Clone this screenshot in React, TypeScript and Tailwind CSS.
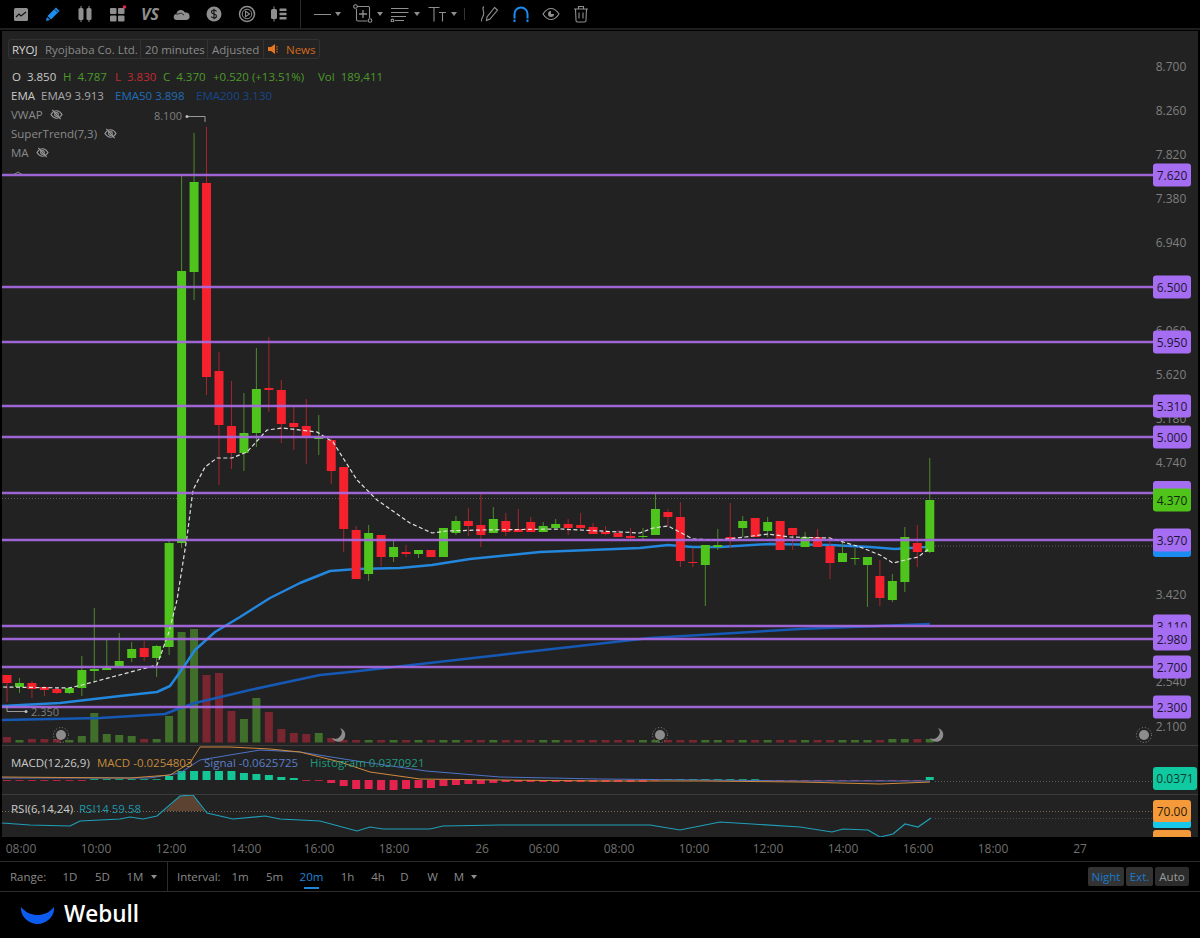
import React from 'react';

// [bodyTop, bodyBottom, wickTop, wickBottom, 'g' | 'r'] in page pixels
type Candle = [number, number, number, number, 'g' | 'r'];

const candles: Candle[] = [
  [675, 683, 675, 702, 'r'], [683, 687, 678, 693, 'g'], [683, 689, 681, 698, 'r'], [687, 690, 686, 696, 'r'],
  [689, 693, 688, 694, 'r'], [688, 693, 687, 694, 'g'], [670, 688, 656, 696, 'g'], [669, 671, 608, 683, 'g'],
  [668, 670, 640, 670, 'g'], [661, 666, 633, 666, 'g'], [649, 658, 642, 662, 'g'], [648, 657, 641, 661, 'r'],
  [646, 658, 645, 677, 'g'], [543, 647, 540, 655, 'g'], [271, 543, 176, 548, 'g'], [182, 272, 133, 300, 'g'],
  [183, 377, 127, 395, 'r'], [371, 425, 352, 485, 'r'], [426, 453, 381, 469, 'r'], [433, 453, 393, 471, 'g'],
  [389, 433, 348, 447, 'g'], [388, 390, 337, 412, 'r'], [390, 424, 380, 443, 'r'], [423, 427, 407, 450, 'r'],
  [426, 436, 399, 464, 'r'], [437, 439, 415, 455, 'g'], [440, 471, 438, 484, 'r'], [467, 529, 467, 552, 'r'],
  [530, 579, 526, 579, 'r'], [533, 574, 525, 581, 'g'], [535, 557, 535, 566, 'r'], [547, 557, 539, 562, 'g'],
  [552, 554, 545, 557, 'r'], [550, 554, 550, 558, 'g'], [550, 557, 550, 557, 'r'], [528, 557, 528, 557, 'g'],
  [521, 533, 516, 535, 'g'], [521, 526, 508, 536, 'r'], [525, 535, 493, 547, 'r'], [519, 533, 507, 533, 'g'],
  [521, 532, 513, 536, 'r'], [529, 532, 509, 532, 'r'], [522, 532, 517, 532, 'r'], [526, 532, 522, 532, 'g'],
  [524, 528, 519, 528, 'g'], [524, 528, 519, 535, 'r'], [525, 528, 513, 530, 'r'], [527, 534, 523, 534, 'r'],
  [532, 534, 526, 535, 'r'], [533, 537, 530, 537, 'r'], [536, 538, 528, 539, 'r'], [536, 537, 528, 540, 'g'],
  [509, 535, 493, 535, 'g'], [512, 517, 509, 526, 'r'], [517, 561, 502, 567, 'r'], [562, 563, 548, 567, 'r'],
  [545, 565, 545, 606, 'g'], [545, 547, 529, 550, 'g'], [537, 540, 503, 548, 'r'], [521, 528, 516, 537, 'g'],
  [518, 537, 518, 537, 'r'], [522, 531, 517, 537, 'g'], [521, 550, 521, 550, 'r'], [528, 535, 528, 550, 'r'],
  [537, 547, 532, 547, 'g'], [537, 547, 529, 547, 'r'], [546, 563, 537, 579, 'r'], [553, 562, 540, 562, 'g'],
  [558, 559, 548, 565, 'g'], [557, 565, 557, 607, 'g'], [576, 598, 560, 606, 'r'], [581, 600, 574, 602, 'g'],
  [537, 582, 527, 592, 'g'], [543, 552, 525, 567, 'r'], [500, 552, 458, 553, 'g'],
];

const volumeTops = [737, 740, 739, 739, 739, 740, 736, 713, 734, 735, 736, 739, 739, 716, 632, 629, 675, 673, 711, 719, 698, 712, 729, 733, 734, 733, 738];

const macdBars = [
  -1, -1, -1, -1, -1, -1, -1, 1, 1, 1, 1, 1, 1, 4, 9, 9, 9, 9, 9, 7, 6, 5, 3, 2, -1, -1, -3, -6, -9, -9, -10, -10, -9, -8, -8, -6, -5, -4, -4, -3,
  -2, -2, -2, -2, -2, -2, -2, -2, -2, -2, -2, -2, -1, 1, 1, 1, 1, 1, 1, 1, 1, -1, -1, -1, -1, -1, -1, -1, -1, -1, -1, -1, -1, -1, 3,
];

const ema9 = '3,687 69,688 82,685 157,665 169,632 177,600 187,537 193,490 205,467 217,458 232,458 247,452 267,430 283,428 317,432 333,442 357,480 377,500 410,523 432,533 447,531 481,530 560,529 640,533 653,528 668,526 693,539 718,540 745,537 768,534 790,537 830,538 860,547 880,555 893,563 905,560 918,557 930,548';
const ema50 = '2,706 60,703 120,696 157,692 170,686 185,665 195,650 215,632 240,617 270,598 300,583 330,571 357,569 400,568 432,565 470,559 540,552 640,548 668,545 693,547 720,547 770,544 830,545 870,547 895,549 925,547 930,546';
const ema200 = '2,720 100,718 165,714 175,710 195,703 250,690 320,675 350,672 500,655 650,638 800,629 930,624';

const purpleLines = [
  { y: 175, label: '7.620' }, { y: 287, label: '6.500' }, { y: 342, label: '5.950' }, { y: 406, label: '5.310' },
  { y: 437, label: '5.000' }, { y: 493, label: '' }, { y: 540, label: '3.970' }, { y: 626, label: '3.110' },
  { y: 639, label: '2.980' }, { y: 667, label: '2.700' }, { y: 707, label: '2.300' },
];

const axisPrices = [
  ['8.700', 67], ['8.260', 111], ['7.820', 155], ['7.380', 199], ['6.940', 243], ['6.060', 331], ['5.620', 375],
  ['5.180', 419], ['4.740', 463], ['3.420', 595], ['2.540', 682], ['2.100', 727],
] as const;

const timeLabels = [
  ['08:00', 21], ['10:00', 96], ['12:00', 171], ['14:00', 246], ['16:00', 319], ['18:00', 394], ['26', 482],
  ['06:00', 544], ['08:00', 619], ['10:00', 694], ['12:00', 768], ['14:00', 843], ['16:00', 918], ['18:00', 993], ['27', 1080],
] as const;

const cx = (i: number) => 7 + i * 12.47;

function Sun({ x, y }: { x: number; y: number }) {
  return (
    <g fill="#8c8c8c">
      <circle cx={x} cy={y} r="5" />
      <circle cx={x} cy={y} r="7.5" fill="none" stroke="#8c8c8c" strokeWidth="1" strokeDasharray="1 2" />
    </g>
  );
}

function Moon({ x, y }: { x: number; y: number }) {
  return <path transform={`translate(${x} ${y})`} d="M2-7A7 7 0 1 1-6 3 6.500 6.500 0 0 0 2-7Z" fill="#8c8c8c" />;
}

function MainChart() {
  return (
    <svg viewBox="2 31 1196 714" className="block h-full w-full" style={{ fontSize: 12 }}>
      {axisPrices.map(([t, y]) => (
        <text key={t} x="1171" y={y + 4} textAnchor="middle" fill="#7f7f7f">{t}</text>
      ))}
      <line x1="2" x2="1153" y1="498.500" y2="498.500" stroke="#5c5c5c" strokeDasharray="1 2" />
      <line x1="935" x2="1153" y1="546" y2="546" stroke="#5c5c5c" strokeDasharray="1 2" />

      {candles.map((c, i) => {
        const top = i < volumeTops.length ? volumeTops[i] : i > 70 ? 739 : 740;
        return (
          <rect key={i} x={cx(i) - 4} y={top} width="8" height={742.5 - top} fill={c[4] === 'g' ? '#3f6f2a' : '#7a2630'} />
        );
      })}

      <polyline points={ema200} fill="none" stroke="#1559b5" strokeWidth="2.5" strokeLinejoin="round" />
      <polyline points={ema50} fill="none" stroke="#2387dd" strokeWidth="2.5" strokeLinejoin="round" />

      {candles.map((c, i) => (
        <g key={i}>
          <line x1={cx(i)} x2={cx(i)} y1={c[2]} y2={c[3]} stroke={c[4] === 'g' ? '#4f8a2c' : '#a5262f'} strokeWidth="1" />
          <rect x={cx(i) - 4.500} y={c[0]} width="9" height={c[1] - c[0]} fill={c[4] === 'g' ? '#4fc41c' : '#f5222d'} />
        </g>
      ))}

      <polyline points={ema9} fill="none" stroke="#e0e0e0" strokeWidth="1.2" strokeDasharray="4 2.500" />

      {purpleLines.map((l) => (
        <line key={l.y} x1="2" x2="1153" y1={l.y} y2={l.y} stroke="#a86ae4" strokeOpacity="0.92" strokeWidth="2.4" />
      ))}

      <rect x="1153" y="481" width="38" height="20" rx="3" fill="#a56ef2" />
      <rect x="1153" y="548" width="38" height="9" rx="3" fill="#1b8cf2" />
      {purpleLines.filter((l) => l.label).map((l) => (
        <g key={l.y}>
          <rect x="1153" y={l.y - 11.500} width="38" height="23" rx="3" fill="#a56ef2" />
          <text x="1172" y={l.y + 4.500} textAnchor="middle" fill="#1d1433">{l.label}</text>
        </g>
      ))}
      <rect x="1153" y="488.500" width="38" height="23" rx="3" fill="#50c31a" />
      <text x="1172" y="504.500" textAnchor="middle" fill="#10290a">4.370</text>

      <g fill="none" stroke="#9a9a9a">
        <path d="M187 116.500H205V122" />
        <path d="M7 706V711.500H26" />
        <path d="M14 174.500 18 172 22 174.500" stroke="#8a8a8a" />
      </g>
      <circle cx="187" cy="116.500" r="1.500" fill="#bdbdbd" />
      <circle cx="26" cy="711.500" r="1.500" fill="#bdbdbd" />
      <text x="182" y="120" textAnchor="end" fill="#7f7f7f" style={{ fontSize: 11 }}>8.100</text>
      <text x="31" y="716" fill="#7f7f7f" style={{ fontSize: 11 }}>2.350</text>

      <Sun x={61} y={735} />
      <Moon x={338} y={735} />
      <Sun x={660} y={735} />
      <Moon x={936} y={735} />
      <Sun x={1144} y={735} />
    </svg>
  );
}

function MacdChart() {
  return (
    <svg viewBox="2 746 1196 48" className="block h-full w-full" style={{ fontSize: 12 }}>
      <line x1="935" x2="1153" y1="781.500" y2="781.500" stroke="#5c5c5c" strokeDasharray="1 2" />
      {macdBars.map((h, i) => (
        <rect key={i} x={cx(i) - 4} y={h > 0 ? 780 - h : 780} width="8" height={Math.max(Math.abs(h), 1)} fill={h > 0 ? '#14c596' : '#e5234f'} opacity={Math.abs(h) < 2 ? 0.75 : 1} />
      ))}
      <polyline points="2,778 150,778 180,773 200,760 260,750 300,752 350,760 426,771 500,777 600,779 800,781 930,781" fill="none" stroke="#4e74c8" strokeWidth="1" />
      <polyline points="2,777 130,778 170,775 190,763 200,747 230,747 270,749 300,752 340,762 370,772 420,779 500,780 600,781 700,781 800,782 880,784 930,782" fill="none" stroke="#d08a3c" strokeWidth="1" />
      <rect x="1153" y="767" width="44" height="23" rx="3" fill="#10c9a0" />
      <text x="1175" y="783" textAnchor="middle" fill="#0d3a30">0.0371</text>
    </svg>
  );
}

function RsiChart() {
  return (
    <svg viewBox="2 795 1196 42" className="block h-full w-full" style={{ fontSize: 12 }}>
      <line x1="2" x2="1153" y1="811.500" y2="811.500" stroke="#7a6a55" strokeDasharray="1 2" />
      <line x1="935" x2="1153" y1="818.500" y2="818.500" stroke="#4a4a4a" strokeDasharray="1 2" />
      <polygon points="165,811 180,796 193,795 204,811" fill="#5b4231" />
      <polyline
        points="2,823 30,825 70,826 80,821 120,819 130,817 143,819 157,816 180,796 193,795 207,813 233,819 265,816 280,819 320,821 357,831 370,827 383,829 430,829 443,826 500,825 650,825 680,830 720,822 800,827 832,832 843,829 868,830 880,837 893,834 905,824 918,827 931,818"
        fill="none"
        stroke="#1f9fb8"
        strokeWidth="1.2"
      />
      <rect x="1153" y="830" width="38" height="20" rx="3" fill="#f59a3a" />
      <rect x="1153" y="820" width="38" height="8" rx="2" fill="#18c8ea" />
      <rect x="1153" y="800" width="38" height="22" rx="3" fill="#f59a3a" />
      <text x="1172" y="816" textAnchor="middle" fill="#2c1a06">70.00</text>
    </svg>
  );
}

function Caret({ flush }: { flush?: boolean }) {
  return <span className={`${flush ? '' : 'ml-[4px]'} h-0 w-0 border-x-[3px] border-t-[4px] border-x-transparent border-t-[#8f8f8f]`} />;
}

function EyeOff() {
  return (
    <svg width="13" height="13" viewBox="0 0 14 14" fill="none" stroke="#9a9a9a" strokeWidth="1.200">
      <path d="M1 7C3 4 5 3 7 3s4 1 6 4c-2 3-4 4-6 4S3 10 1 7Z" />
      <circle cx="7" cy="7" r="2" />
      <path d="M2.500 2 11.500 12" />
    </svg>
  );
}

const gray = '#8f8f8f';

function TopIcons() {
  return (
    <>
      <div className="flex w-[32px] justify-center">
        <svg width="16" height="15" viewBox="0 0 16 15">
          <rect x="1" y="1" width="14" height="13" rx="1.500" fill={gray} />
          <path d="M3 10 6 7l2 2 5-4" fill="none" stroke="#111" strokeWidth="1.200" />
        </svg>
      </div>
      <div className="flex w-[32px] justify-center">
        <svg width="16" height="16" viewBox="0 0 16 16">
          <path d="M11 1.500 14.500 5 6 13.500 2.500 10Z" fill="#1c8cf0" />
          <path d="M2 11 5 14 1 15Z" fill="#1c8cf0" />
          <path d="M10 3.500 12.500 6" stroke="#000" strokeWidth="0.800" />
        </svg>
      </div>
      <div className="flex w-[32px] justify-center">
        <svg width="16" height="18" viewBox="0 0 16 18" fill={gray}>
          <rect x="1.500" y="3" width="5" height="12" rx="1.500" />
          <rect x="9.500" y="3" width="5" height="12" rx="1.500" />
          <rect x="3.500" y="1" width="1" height="16" />
          <rect x="11.500" y="1" width="1" height="16" />
        </svg>
      </div>
      <div className="flex w-[33px] justify-center">
        <svg width="18" height="18" viewBox="0 0 18 18" fill={gray}>
          <rect x="1" y="3" width="6.500" height="6" rx="1" />
          <rect x="9" y="3" width="6.500" height="6" rx="1" />
          <rect x="1" y="10.500" width="6.500" height="6" rx="1" />
          <rect x="9" y="10.500" width="6.500" height="6" rx="1" />
          <circle cx="15.500" cy="2" r="1.800" fill="#e5234f" />
        </svg>
      </div>
      <div className="flex w-[32px] justify-center text-[16px] leading-none font-bold italic text-[#8f8f8f]">VS</div>
      <div className="flex w-[32px] justify-center">
        <svg width="18" height="14" viewBox="0 0 18 14">
          <path d="M4 13a3 3 0 0 1-.5-6A4.500 4.500 0 0 1 12 5.500 3.800 3.800 0 0 1 13.500 13Z" fill={gray} />
          <path d="M3.500 7.500 8 6l3 2" fill="none" stroke="#111" strokeWidth="0.800" />
        </svg>
      </div>
      <div className="flex w-[32px] justify-center">
        <svg width="18" height="18" viewBox="0 0 18 18">
          <circle cx="9" cy="9" r="7.500" fill={gray} />
          <path d="M11.500 6.500C11 5.500 10 5 9 5 7.500 5 6.500 5.800 6.500 7c0 2.500 5 1.500 5 4 0 1.200-1 2-2.500 2-1.200 0-2.200-.5-2.700-1.500M9 3.800v10.400" fill="none" stroke="#111" strokeWidth="1.100" />
        </svg>
      </div>
      <div className="flex w-[33px] justify-center">
        <svg width="18" height="18" viewBox="0 0 18 18" fill="none" stroke={gray}>
          <circle cx="9" cy="9" r="7.500" strokeWidth="1.500" />
          <circle cx="9" cy="9" r="4.800" strokeWidth="1" />
          <path d="M7.500 6.300 11.500 9l-4 2.700Z" strokeWidth="1.100" />
        </svg>
      </div>
      <div className="flex w-[32px] justify-center">
        <svg width="18" height="18" viewBox="0 0 18 18" fill={gray}>
          <rect x="1" y="4" width="6" height="10" rx="1.500" />
          <rect x="3.500" y="1.500" width="1" height="15" />
          <rect x="9.500" y="3.500" width="7" height="2.500" rx="0.500" />
          <rect x="9.500" y="7.800" width="7" height="2.500" rx="0.500" />
          <rect x="9.500" y="12" width="7" height="2.500" rx="0.500" />
        </svg>
      </div>
    </>
  );
}

function DrawIcons() {
  return (
    <>
      <div className="ml-[13px] flex w-[27px] items-center">
        <span className="h-px w-[17px] bg-[#8f8f8f]" />
        <Caret />
      </div>
      <div className="ml-[12px] flex w-[30px] items-center">
        <svg width="20" height="20" viewBox="0 0 20 20" fill="none" stroke={gray} strokeWidth="1.100">
          <path d="M4 2.500H15.500a1.500 1.500 0 0 1 1 1.500V14M14.500 17H5A1.500 1.500 0 0 1 3.500 15.500V5" />
          <circle cx="2.500" cy="2.500" r="1.800" />
          <circle cx="17" cy="16.500" r="1.800" />
          <path d="M10 6v8M6 10h8" strokeWidth="1.300" />
        </svg>
        <Caret />
      </div>
      <div className="ml-[7px] flex w-[30px] items-center">
        <svg width="20" height="16" viewBox="0 0 20 16" fill="none" stroke={gray} strokeWidth="1.200">
          <path d="M1 2.500H18.500M1 6.500H18.500M1 10.500H16M5 14.500H14" />
          <circle cx="2.500" cy="14.500" r="1.300" />
        </svg>
        <Caret />
      </div>
      <div className="ml-[8px] flex w-[29px] items-center">
        <svg width="19" height="18" viewBox="0 0 19 18" fill="none" stroke={gray} strokeWidth="1.100">
          <path d="M0.500 2.500H11.500M6 2.500V16.500M11 7.500H18M14.500 7.500V16.500" />
        </svg>
        <Caret />
      </div>
      <span className="ml-[7px] h-[12px] w-px bg-[#333]" />
      <div className="ml-[15px] flex w-[20px] justify-center">
        <svg width="20" height="18" viewBox="0 0 20 18" fill="none" stroke={gray} strokeWidth="1.100">
          <path d="M4 1.500C1 3 5 7 3.500 10 2.500 12.500 1 14 1.500 16.500" />
          <path d="M14.500 2.500 17.500 5 10 14 6.500 15.500 7 12Z" />
        </svg>
      </div>
      <div className="ml-[11px] flex w-[20px] justify-center">
        <svg width="18" height="18" viewBox="0 0 18 18" fill="none" stroke="#1c8cf0" strokeWidth="2">
          <path d="M2.500 17V9a6.500 6.500 0 0 1 13 0v8" />
          <path d="M1 14h4M13 14h4" strokeWidth="1" stroke="#000" />
        </svg>
      </div>
      <div className="ml-[10px] flex w-[20px] justify-center">
        <svg width="18" height="14" viewBox="0 0 18 14" fill="none" stroke={gray} strokeWidth="1.200">
          <path d="M1 7C4 2.500 6.500 1.500 9 1.500S14 2.500 17 7c-3 4.500-5.500 5.500-8 5.500S4 11.500 1 7Z" />
          <path d="M9 4a3 3 0 1 0 3 3H9Z" fill={gray} stroke="none" />
        </svg>
      </div>
      <div className="ml-[10px] flex w-[20px] justify-center">
        <svg width="16" height="18" viewBox="0 0 16 18" fill="none" stroke={gray} strokeWidth="1.100">
          <path d="M1 4h14M5.500 4V1.500h5V4M2.500 4l.5 11.500a1.500 1.500 0 0 0 1.500 1.500h7a1.500 1.500 0 0 0 1.500-1.500L13.500 4M6 7.500v6M10 7.500v6" />
        </svg>
      </div>
    </>
  );
}

function ChartHeader() {
  return (
    <div className="absolute top-[8px] left-[6px] flex flex-col text-[11.5px] leading-[19px]">
      <div className="flex h-[20px] w-[312px] items-center rounded-[3px] border border-[#333] bg-[#232323] text-[#8a8a8a]">
        <span className="ml-[3px] w-[33px] text-[#d5d5d5]">RYOJ</span>
        <span className="w-[96px] border-r border-[#333] whitespace-nowrap">Ryojbaba Co. Ltd.</span>
        <span className="w-[67px] border-r border-[#333] pl-[4px] whitespace-nowrap">20 minutes</span>
        <span className="w-[56px] border-r border-[#333] pl-[4px]">Adjusted</span>
        <span className="flex items-center gap-[6px] pl-[4px] text-[#d2691e]">
          <svg width="12" height="12" viewBox="0 0 12 12" fill="#e8761e">
            <path d="M0 4h3l4-3v10L3 8H0Z" />
            <path d="M8.500 3h1v1.500h-1ZM8.500 5.500h1V7h-1ZM8.500 8h1v1.500h-1Z" />
          </svg>
          News
        </span>
      </div>
      <div className="mt-[8px] ml-[4px] flex flex-col">
        <div className="flex whitespace-nowrap text-[#4c9a2a]">
          <span className="w-[51px] text-[#c9c9c9]">O&nbsp; 3.850</span>
          <span className="w-[52px]">H&nbsp; 4.787</span>
          <span className="w-[48px] text-[#c02a35]">L&nbsp; 3.830</span>
          <span className="w-[50px]">C&nbsp; 4.370</span>
          <span className="w-[105px]">+0.520 (+13.51%)</span>
          <span>Vol&nbsp; 189,411</span>
        </div>
        <div className="flex whitespace-nowrap">
          <span className="-ml-[1px] w-[30px] text-[#c9c9c9]">EMA</span>
          <span className="w-[74px] text-[#a8a8a8]">EMA9 3.913</span>
          <span className="w-[81px] text-[#1f6db8]">EMA50 3.898</span>
          <span className="text-[#16468c]">EMA200 3.130</span>
        </div>
        <div className="-ml-[1px] flex items-center gap-[7px] text-[#8a8a8a]">VWAP <EyeOff /></div>
        <div className="-ml-[1px] flex items-center gap-[7px] text-[#8a8a8a]">SuperTrend(7,3) <EyeOff /></div>
        <div className="-ml-[1px] flex items-center gap-[7px] text-[#8a8a8a]">MA <EyeOff /></div>
      </div>
    </div>
  );
}

export default function App() {
  return (
    <div className="flex h-[938px] w-[1200px] flex-col overflow-hidden bg-black font-['Open_Sans',sans-serif]">
      <div className="flex h-[28px] shrink-0 items-center pl-[5px]">
        <TopIcons />
        <span className="ml-[5px] h-[28px] w-px bg-[#2a2a2a]" />
        <DrawIcons />
      </div>
      <div className="h-[2px] shrink-0 bg-[#1e1e1e]" />
      <div className="h-px shrink-0" />

      <div className="relative mx-[2px] h-[714px] shrink-0 bg-[#222222]">
        <MainChart />
        <ChartHeader />
      </div>
      <div className="relative mx-[2px] h-[49px] shrink-0 border-t border-[#3c3c3c] bg-[#222222]">
        <MacdChart />
        <div className="absolute top-[7px] left-[9px] flex text-[11.5px] leading-[19px] whitespace-nowrap">
          <span className="w-[86px] text-[#c9c9c9]">MACD(12,26,9)</span>
          <span className="w-[107px] text-[#c48a3d]">MACD -0.0254803</span>
          <span className="w-[106px] text-[#5b7fc9]">Signal -0.0625725</span>
          <span className="text-[#1f9a7e]">Histogram 0.0370921</span>
        </div>
      </div>
      <div className="relative mx-[2px] h-[43px] shrink-0 border-t border-[#3c3c3c] bg-[#222222]">
        <RsiChart />
        <div className="absolute top-[4px] left-[9px] flex text-[11.5px] leading-[19px] whitespace-nowrap">
          <span className="w-[68px] text-[#c9c9c9]">RSI(6,14,24)</span>
          <span className="text-[#2195a9]">RSI14 59.58</span>
        </div>
      </div>

      <div className="h-[25px] shrink-0 border-b border-[#2c2c2c]">
        <svg viewBox="0 837 1200 24" className="block h-[24px] w-[1200px]" style={{ fontSize: 12 }}>
          {timeLabels.map(([t, x], i) => (
            <text key={i} x={x} y="853" textAnchor="middle" fill="#707070">{t}</text>
          ))}
        </svg>
      </div>

      <div className="flex h-[30px] shrink-0 items-center border-b border-[#2c2c2c] pl-[10px] text-center text-[11.5px] text-[#8a8a8a]">
        <span className="w-[44px] text-left">Range:</span>
        <span className="w-[32px]">1D</span>
        <span className="w-[33px]">5D</span>
        <span className="w-[32px]">1M</span>
        <Caret flush />
        <span className="ml-[10px] h-full w-px bg-[#2c2c2c]" />
        <span className="ml-[9px] w-[47px] text-left">Interval:</span>
        <span className="w-[32px]">1m</span>
        <span className="w-[37px]">5m</span>
        <span className="relative w-[37px] text-[#1c86d8]">
          20m
          <span className="absolute top-[19px] left-[11px] h-[2px] w-[15px] bg-[#1c86d8]" />
        </span>
        <span className="w-[35px]">1h</span>
        <span className="w-[26px]">4h</span>
        <span className="w-[27px]">D</span>
        <span className="w-[29px]">W</span>
        <span className="w-[24px]">M</span>
        <Caret flush />
        <div className="ml-auto mr-[11px] flex h-[19px] gap-[2px] leading-[19px]">
          <span className="w-[36px] rounded-[2px] bg-[#333] text-[#1c78c8]">Night</span>
          <span className="w-[27px] rounded-[2px] bg-[#333] text-[#1c78c8]">Ext.</span>
          <span className="w-[34px] rounded-[2px] bg-[#2c2c2c] text-[#9a9a9a]">Auto</span>
        </div>
      </div>

      <div className="flex flex-1 items-center pb-[1px] pl-[21px]">
        <svg width="33" height="18" viewBox="0 0 33 18">
          <path d="M0 1C5 7 11 9 16.500 9 22 9 28 7 33 1 34 10 26 18 16.500 18 7 18-1 10 0 1Z" fill="#0d5cf0" />
        </svg>
        <span className="ml-[10px] text-[22.500px] leading-none font-semibold text-white">Webull</span>
      </div>
    </div>
  );
}
